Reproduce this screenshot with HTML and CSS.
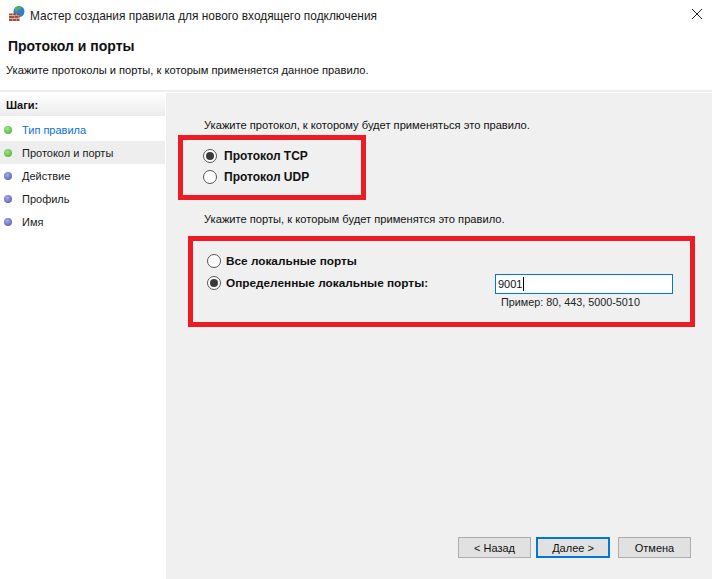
FILE: index.html
```html
<!DOCTYPE html>
<html lang="ru">
<head>
<meta charset="utf-8">
<title>Мастер создания правила</title>
<link rel="stylesheet" href="styles.css">
</head>
<body>
<div class="window">
  <div class="titlebar">
    <svg class="app-icon" width="16" height="16" viewBox="0 0 16 16">
      <circle cx="10" cy="5.500" r="5.500" fill="#2f7fd0"/>
      <path d="M6 1.500c2-1.500 5-1.500 6.500 0l-1.500 2.500-2-.5-1 2.500-2-1.500z" fill="#58b04a"/>
      <path d="M0 7.500h10.500v2H0zM0 10h10.500v2H0zM0 12.500h10.500V15H0z" fill="#a24e3e"/>
      <path d="M0 9.500h10.500v.5H0zM0 12h10.500v.5H0zM3 7.500h.5v2H3zM7 7.500h.5v2H7zM5 10h.5v2H5zM9 10h.5v2H9zM3 12.500h.5V15H3zM7 12.500h.5V15H7z" fill="#dcbcae"/>
    </svg>
    <span class="title-text">Мастер создания правила для нового входящего подключения</span>
    <svg class="close" width="10" height="10" viewBox="0 0 10 10"><path d="M0 0l10 10M10 0L0 10" stroke="#222" stroke-width="1" fill="none"/></svg>
  </div>
  <header class="head">
    <h1>Протокол и порты</h1>
    <p>Укажите протоколы и порты, к которым применяется данное правило.</p>
  </header>
  <div class="body">
    <aside class="side">
      <div class="side-title">Шаги:</div>
      <ul class="steps">
        <li class="step done link"><i class="dot green"></i>Тип правила</li>
        <li class="step done current"><i class="dot green"></i>Протокол и порты</li>
        <li class="step"><i class="dot blue"></i>Действие</li>
        <li class="step"><i class="dot blue"></i>Профиль</li>
        <li class="step"><i class="dot blue"></i>Имя</li>
      </ul>
    </aside>
    <main class="main">
      <p class="lead">Укажите протокол, к которому будет применяться это правило.</p>
      <section class="box box-proto">
        <div class="radio-row"><span class="radio on"></span>Протокол TCP</div>
        <div class="radio-row"><span class="radio"></span>Протокол UDP</div>
      </section>
      <p class="lead lead-ports">Укажите порты, к которым будет применятся это правило.</p>
      <section class="box box-ports">
        <div class="radio-row"><span class="radio"></span>Все локальные порты</div>
        <div class="radio-row ports-row">
          <span class="radio on"></span><span class="ports-label">Определенные локальные порты:</span>
          <div class="input">9001<span class="caret"></span></div>
        </div>
        <div class="hint">Пример: 80, 443, 5000-5010</div>
      </section>
      <div class="buttons">
        <button class="btn">&lt; Назад</button>
        <button class="btn primary">Далее &gt;</button>
        <button class="btn cancel">Отмена</button>
      </div>
    </main>
  </div>
</div>
</body>
</html>
```
FILE: styles.css
```css
* { box-sizing: border-box; }
html, body { margin: 0; padding: 0; }
body { width: 712px; height: 579px; overflow: hidden; background: #fff; font-family: "Liberation Sans", Arial, sans-serif; font-size: 12px; color: #111; }
.window { display: flex; flex-direction: column; height: 579px; }
.titlebar { height: 32px; display: flex; align-items: center; padding: 0 10px 0 9px; flex: none; }
.app-icon { margin-right: 5px; margin-bottom: 4px; flex: none; }
.title-text { font-size: 11.900px; color: #1a1a1a; }
.close { margin-left: auto; margin-bottom: 4px; }
.head { height: 60px; flex: none; padding-top: 6px; padding-left: 8px; border-bottom: 2px solid #eeeeee; }
.head h1 { margin: 0; font-size: 14px; font-weight: bold; line-height: 16px; }
.head p { margin: 9px 0 0 -2px; font-size: 11.150px; line-height: 14px; }
.body { flex: 1; display: flex; min-height: 0; margin-top: 1px; }
.side { width: 167px; flex: none; border-right: 1.500px solid #eeeeee; padding-right: 1.500px; }
.side-title { height: 23px; line-height: 24px; padding-left: 6px; font-weight: bold; font-size: 11px; background: linear-gradient(#fff, #ececec); }
.steps { list-style: none; margin: 2px 0 0; padding: 0; }
.step { height: 23px; display: flex; align-items: center; padding-left: 4px; font-size: 11px; color: #1a1a1a; }
.step.link { color: #0a6fd8; }
.step.current { background: #eeeeee; }
.dot { width: 8px; height: 8px; border-radius: 50%; margin-right: 10px; flex: none; }
.dot.green { background: radial-gradient(circle at 40% 35%, #9be67e, #3fae2e); }
.dot.blue { background: radial-gradient(circle at 40% 35%, #a9a9ea, #4f4fb0); }
.main { flex: 1; background: #f0f0f0; position: relative; display: flex; flex-direction: column; padding: 0 0 0 11px; }
.lead { margin: 0; font-size: 11.150px; line-height: 14px; padding-left: 26px; }
.main > .lead:first-child { margin-top: 25px; }
.lead-ports { margin-top: 12px; }
.box { border: 5px solid #ed1c24; }
.box-proto { width: 188px; height: 65px; margin-top: 3px; padding: 5px 0 0 20px; }
.box-proto .radio-row { height: 21px; }
.box-proto .radio { margin-right: 7px; }
.box-ports { width: 507px; height: 91px; margin: 10px 0 0 10px; padding: 9px 0 0 14px; }
.box-ports .radio-row { font-size: 11.800px; }
.radio-row { display: flex; align-items: center; height: 22px; font-weight: bold; font-size: 12px; }
.radio { width: 14px; height: 14px; border-radius: 50%; border: 1px solid #555; background: #fff; margin-right: 5px; flex: none; position: relative; }
.radio.on::after { content: ""; position: absolute; left: 2px; top: 2px; width: 8px; height: 8px; border-radius: 50%; background: #3a3a3a; }
.ports-label { flex: none; width: 269px; }
.input { width: 178px; height: 20px; margin-top: 1px; border: 1px solid #0078d7; background: #fff; font-weight: normal; font-size: 11px; line-height: 18px; padding-left: 2px; display: flex; align-items: center; }
.caret { width: 1px; height: 14px; background: #000; margin-left: 1px; }
.hint { margin-left: 294px; font-size: 10.800px; line-height: 14px; margin-top: 1px; color: #222; }
.buttons { margin-top: auto; margin-bottom: 21px; display: flex; padding-left: 280px; }
.btn { width: 73px; height: 21px; border: 1px solid #adadad; background: #e1e1e1; font-family: inherit; font-size: 11px; color: #111; padding: 0; }
.btn.primary { border: 2px solid #0078d7; width: 74px; margin-left: 5px; }
.btn.cancel { margin-left: 8px; }
```
